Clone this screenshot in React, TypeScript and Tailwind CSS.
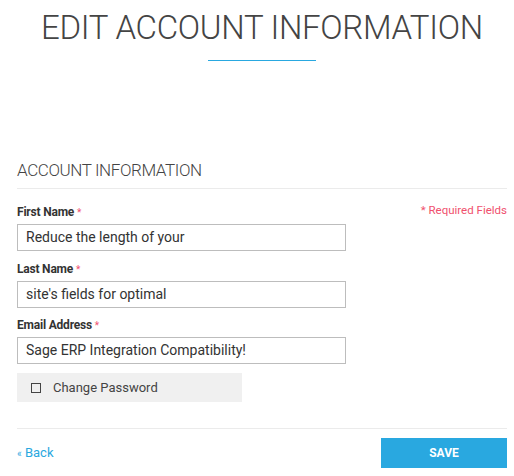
import React from "react";

const Field = ({ label, value }: { label: string; value: string }) => (
  <div className="flex flex-col">
    <div className="text-[12px] leading-[16px] font-bold text-[#333] tracking-[-0.2px]">
      {label} <span className="text-[#f0506e] font-normal text-[10px]">*</span>
    </div>
    <div className="mt-[3px] w-[329px] h-[27px] border border-[#bdbdbd] flex items-center pl-[8px] text-[14px] text-[#333]">
      {value}
    </div>
  </div>
);

export default function App() {
  return (
    <div className="w-[514px] h-[476px] bg-white overflow-hidden" style={{ fontFamily: "Roboto, 'Liberation Sans', sans-serif" }}>
      <div className="pt-[8px] pl-[10px] flex flex-col items-center">
        <h1 className="text-[33px] leading-[40px] font-light text-[#444] tracking-[-0.3px]">EDIT ACCOUNT INFORMATION</h1>
        <div className="mt-[12px] w-[108px] h-[1px] bg-[#29a8e0]" />
      </div>
      <div className="pl-[17px] pr-[7px]">
        <div className="mt-[97px] text-[17px] leading-[24px] font-light text-[#444] tracking-[-0.4px]">ACCOUNT INFORMATION</div>
        <div className="mt-[6px] h-[1px] bg-[#ebebeb]" />
        <div className="relative mt-[15px] flex flex-col gap-[9.5px]">
          <div className="absolute right-0 top-[-2px] text-[11.5px] leading-[16px] text-[#f0506e]">
            * Required Fields
          </div>
          <Field label="First Name" value="Reduce the length of your" />
          <Field label="Last Name" value="site's fields for optimal" />
          <Field label="Email Address" value="Sage ERP Integration Compatibility!" />
        </div>
        <div className="mt-[9px] w-[225px] h-[29px] bg-[#f0f0f0] flex items-center pl-[14px]">
          <div className="w-[10px] h-[10px] border border-[#444]" />
          <span className="ml-[12px] text-[13px] text-[#444]">Change Password</span>
        </div>
        <div className="mt-[26px] h-[1px] bg-[#ebebeb]" />
        <div className="mt-[9px] flex items-center justify-between">
          <a className="text-[13px] text-[#29a8e0]"><span className="text-[10px]">«</span> Back</a>
          <button className="w-[126px] h-[30px] bg-[#29a8e0] text-white text-[12px] font-bold">SAVE</button>
        </div>
      </div>
    </div>
  );
}
